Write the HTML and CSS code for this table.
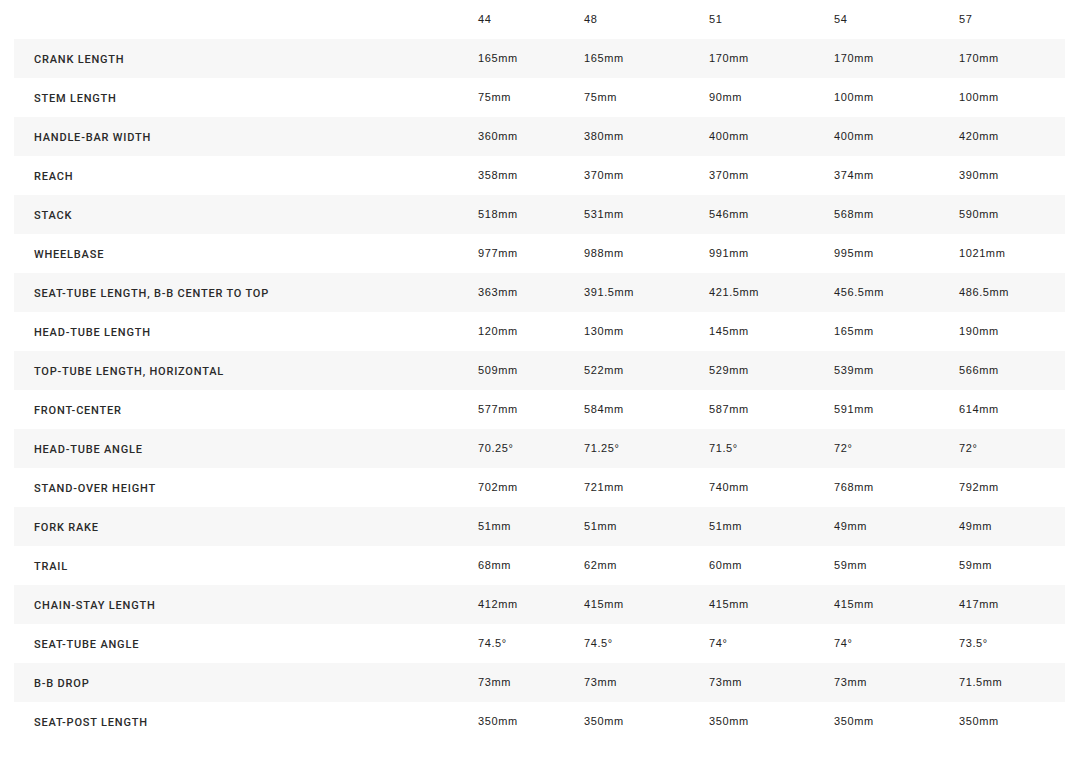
FILE: index.html
```html
<!DOCTYPE html>
<html>
<head>
<meta charset="utf-8">
<link rel="stylesheet" href="styles.css">
</head>
<body>
<div class="geo">
  <div class="row head"><div class="label"></div><div class="val">44</div><div class="val">48</div><div class="val">51</div><div class="val">54</div><div class="val">57</div></div>
  <div class="row"><div class="label">CRANK LENGTH</div><div class="val">165mm</div><div class="val">165mm</div><div class="val">170mm</div><div class="val">170mm</div><div class="val">170mm</div></div>
  <div class="row"><div class="label">STEM LENGTH</div><div class="val">75mm</div><div class="val">75mm</div><div class="val">90mm</div><div class="val">100mm</div><div class="val">100mm</div></div>
  <div class="row"><div class="label">HANDLE-BAR WIDTH</div><div class="val">360mm</div><div class="val">380mm</div><div class="val">400mm</div><div class="val">400mm</div><div class="val">420mm</div></div>
  <div class="row"><div class="label">REACH</div><div class="val">358mm</div><div class="val">370mm</div><div class="val">370mm</div><div class="val">374mm</div><div class="val">390mm</div></div>
  <div class="row"><div class="label">STACK</div><div class="val">518mm</div><div class="val">531mm</div><div class="val">546mm</div><div class="val">568mm</div><div class="val">590mm</div></div>
  <div class="row"><div class="label">WHEELBASE</div><div class="val">977mm</div><div class="val">988mm</div><div class="val">991mm</div><div class="val">995mm</div><div class="val">1021mm</div></div>
  <div class="row"><div class="label">SEAT-TUBE LENGTH, B-B CENTER TO TOP</div><div class="val">363mm</div><div class="val">391.5mm</div><div class="val">421.5mm</div><div class="val">456.5mm</div><div class="val">486.5mm</div></div>
  <div class="row"><div class="label">HEAD-TUBE LENGTH</div><div class="val">120mm</div><div class="val">130mm</div><div class="val">145mm</div><div class="val">165mm</div><div class="val">190mm</div></div>
  <div class="row"><div class="label">TOP-TUBE LENGTH, HORIZONTAL</div><div class="val">509mm</div><div class="val">522mm</div><div class="val">529mm</div><div class="val">539mm</div><div class="val">566mm</div></div>
  <div class="row"><div class="label">FRONT-CENTER</div><div class="val">577mm</div><div class="val">584mm</div><div class="val">587mm</div><div class="val">591mm</div><div class="val">614mm</div></div>
  <div class="row"><div class="label">HEAD-TUBE ANGLE</div><div class="val">70.25°</div><div class="val">71.25°</div><div class="val">71.5°</div><div class="val">72°</div><div class="val">72°</div></div>
  <div class="row"><div class="label">STAND-OVER HEIGHT</div><div class="val">702mm</div><div class="val">721mm</div><div class="val">740mm</div><div class="val">768mm</div><div class="val">792mm</div></div>
  <div class="row"><div class="label">FORK RAKE</div><div class="val">51mm</div><div class="val">51mm</div><div class="val">51mm</div><div class="val">49mm</div><div class="val">49mm</div></div>
  <div class="row"><div class="label">TRAIL</div><div class="val">68mm</div><div class="val">62mm</div><div class="val">60mm</div><div class="val">59mm</div><div class="val">59mm</div></div>
  <div class="row"><div class="label">CHAIN-STAY LENGTH</div><div class="val">412mm</div><div class="val">415mm</div><div class="val">415mm</div><div class="val">415mm</div><div class="val">417mm</div></div>
  <div class="row"><div class="label">SEAT-TUBE ANGLE</div><div class="val">74.5°</div><div class="val">74.5°</div><div class="val">74°</div><div class="val">74°</div><div class="val">73.5°</div></div>
  <div class="row"><div class="label">B-B DROP</div><div class="val">73mm</div><div class="val">73mm</div><div class="val">73mm</div><div class="val">73mm</div><div class="val">71.5mm</div></div>
  <div class="row"><div class="label">SEAT-POST LENGTH</div><div class="val">350mm</div><div class="val">350mm</div><div class="val">350mm</div><div class="val">350mm</div><div class="val">350mm</div></div>
</div>
</body>
</html>
```
FILE: styles.css
```css
html, body {
  margin: 0;
  padding: 0;
  background: #fff;
}
body {
  padding: 0 19px 0 14px;
  color: #222;
}
.geo {
  display: flex;
  flex-direction: column;
  width: 1051px;
}
.row {
  display: grid;
  grid-template-columns: 464px 106px 125px 125px 125px 106px;
  height: 39px;
  align-items: center;
}
.row:nth-child(even) {
  background: #f7f7f7;
}
.label {
  padding-left: 20px;
  padding-top: 1px;
  font-family: Roboto, "Liberation Sans", sans-serif;
  font-weight: 500;
  font-size: 11px;
  letter-spacing: 0.8px;
  color: #2a2a2a;
}
.val {
  padding-bottom: 2px;
  font-family: "Liberation Sans", Arial, sans-serif;
  font-size: 11px;
  letter-spacing: 0.6px;
  color: #222;
}
```
